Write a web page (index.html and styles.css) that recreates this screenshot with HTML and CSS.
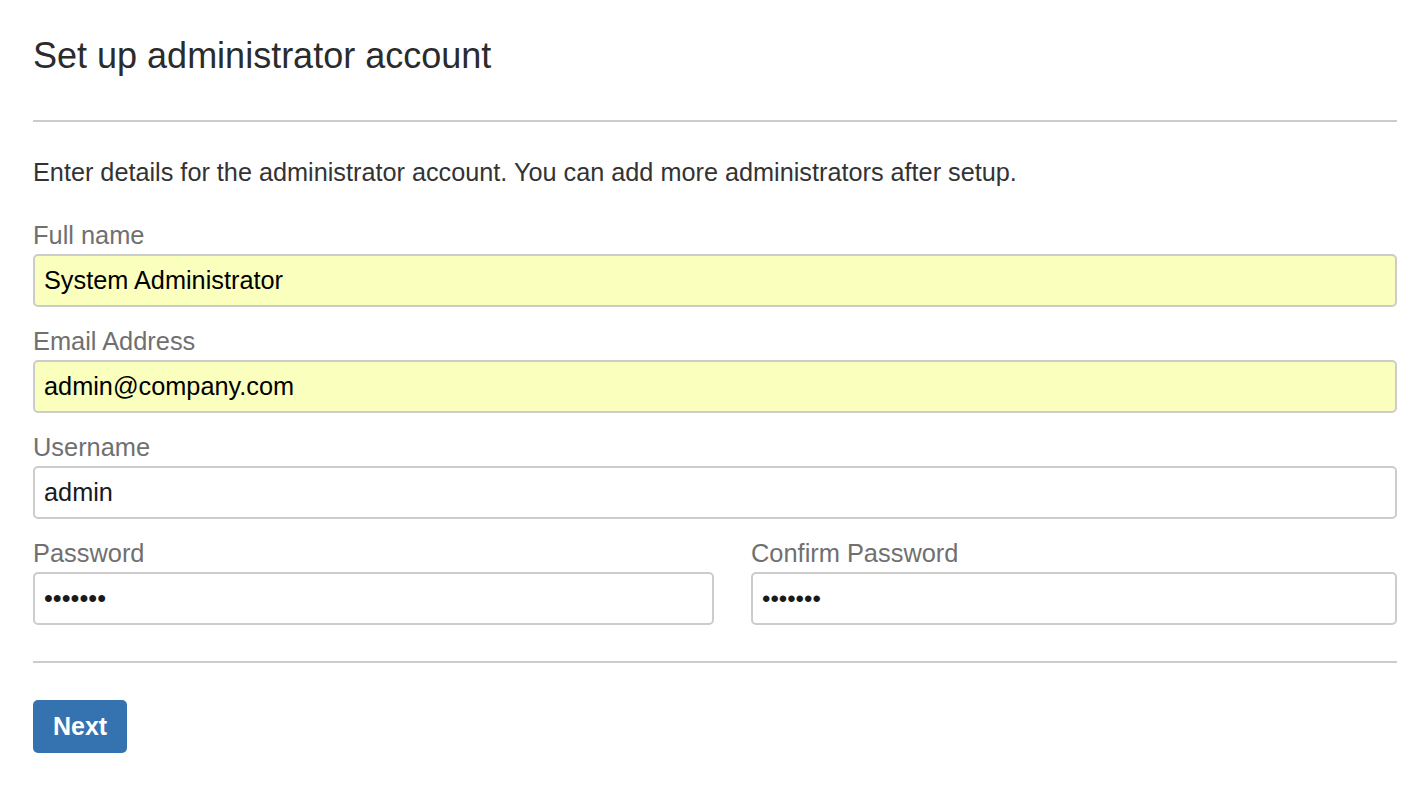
FILE: index.html
```html
<!DOCTYPE html>
<html lang="en">
<head>
<meta charset="utf-8">
<title>Set up administrator account</title>
<link rel="stylesheet" href="styles.css">
</head>
<body>
<main class="page">
  <h1 class="title">Set up administrator account</h1>
  <hr class="rule rule-top">
  <p class="intro">Enter details for the administrator account. You can add more administrators after setup.</p>
  <form class="form">
    <div class="field field-first">
      <label class="label" for="fullname">Full name</label>
      <input class="input autofilled" id="fullname" type="text" value="System Administrator">
    </div>
    <div class="field">
      <label class="label" for="email">Email Address</label>
      <input class="input autofilled" id="email" type="text" value="admin@company.com">
    </div>
    <div class="field">
      <label class="label" for="username">Username</label>
      <input class="input" id="username" type="text" value="admin">
    </div>
    <div class="field-row">
      <div class="field-col">
        <label class="label" for="password">Password</label>
        <input class="input" id="password" type="password" value="1234567">
      </div>
      <div class="field-col">
        <label class="label" for="confirm">Confirm Password</label>
        <input class="input input-small-dots" id="confirm" type="password" value="1234567">
      </div>
    </div>
    <hr class="rule rule-bottom">
    <div class="actions">
      <button class="btn-primary" type="button">Next</button>
    </div>
  </form>
</main>
</body>
</html>
```

FILE: styles.css
```css
* {
  box-sizing: border-box;
}

html, body {
  margin: 0;
  padding: 0;
  background: #ffffff;
}

body {
  font-family: "Liberation Sans", Arial, Helvetica, sans-serif;
  color: #333333;
}

.page {
  padding: 34px 29px 0 33px;
  display: flex;
  flex-direction: column;
}

.title {
  margin: 0;
  font-size: 36px;
  line-height: 44px;
  font-weight: normal;
  color: #2b2b2b;
}

.rule {
  border: 0;
  height: 2px;
  background: #cccccc;
  margin: 0;
}

.rule-top {
  margin-top: 42px;
}

.intro {
  margin: 35px 0 0 0;
  font-size: 25.25px;
  line-height: 30px;
  color: #333333;
}

.form {
  display: flex;
  flex-direction: column;
  margin: 0;
}

.field {
  display: flex;
  flex-direction: column;
  margin-top: 19px;
}

.field-first {
  margin-top: 33px;
}

.field-row {
  display: grid;
  grid-template-columns: 681fr 646fr;
  column-gap: 37px;
  margin-top: 19px;
}

.field-col {
  display: flex;
  flex-direction: column;
}

.label {
  font-size: 25.4px;
  line-height: 30px;
  color: #707070;
  margin-bottom: 4px;
}

.input {
  height: 53px;
  width: 100%;
  border: 2px solid #cccccc;
  border-radius: 5px;
  padding: 0 9px;
  font-family: "Liberation Sans", Arial, Helvetica, sans-serif;
  font-size: 25.3px;
  color: #1a1a1a;
  background: #ffffff;
  outline: none;
}

.input-small-dots {
  font-size: 24px;
}

.autofilled {
  background: #faffbd;
  color: #000000;
}

.rule-bottom {
  margin-top: 36px;
}

.actions {
  display: flex;
  margin-top: 37px;
}

.btn-primary {
  height: 53px;
  padding: 0 20px;
  border: 0;
  border-radius: 5px;
  background: #3572b0;
  color: #ffffff;
  font-family: "Liberation Sans", Arial, Helvetica, sans-serif;
  font-size: 25px;
  font-weight: bold;
  cursor: pointer;
}
```
